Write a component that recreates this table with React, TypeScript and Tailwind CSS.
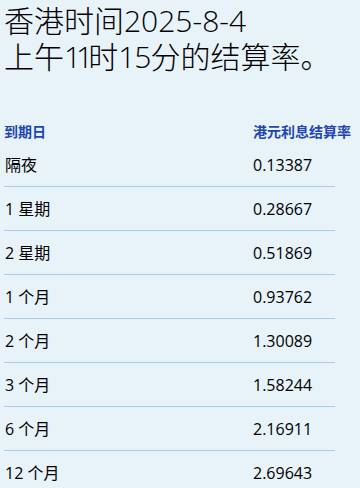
import React from 'react'

const rows = [
  ['隔夜', '0.13387'],
  ['1 星期', '0.28667'],
  ['2 星期', '0.51869'],
  ['1 个月', '0.93762'],
  ['2 个月', '1.30089'],
  ['3 个月', '1.58244'],
  ['6 个月', '2.16911'],
  ['12 个月', '2.69643'],
]

function App() {
  return (
    <div className="h-[488px] w-[360px] overflow-hidden bg-[#e7f2f9] text-black" style={{ fontFamily: '"Open Sans", "Noto Sans CJK SC", sans-serif' }}>
      <h1 className="pl-[4px] pt-[3px] text-[30px] font-light leading-[36px]">
        香港时间2025-8-4
        <br />
        上午<span className="tracking-[-5px]">11</span>时<span className="tracking-[-1px]">15</span>分的结算率。
      </h1>
      <div className="mt-[44px] flex h-[24px] items-center pl-[4px] text-[14px] font-bold text-[#1f47b0]" style={{ fontFamily: '"Noto Sans CJK SC", sans-serif' }}>
        <div className="w-[249px]">到期日</div>
        <div className="whitespace-nowrap">港元利息结算率</div>
      </div>
      <div className="w-[335px] pl-[4px]">
        {rows.map(([term, rate]) => (
          <div key={term} className="flex h-[44px] items-center border-b border-[#a9ccee] pl-[1px] text-[16px]">
            <div className="w-[248px]">{term}</div>
            <div>{rate}</div>
          </div>
        ))}
      </div>
    </div>
  )
}

export default App
